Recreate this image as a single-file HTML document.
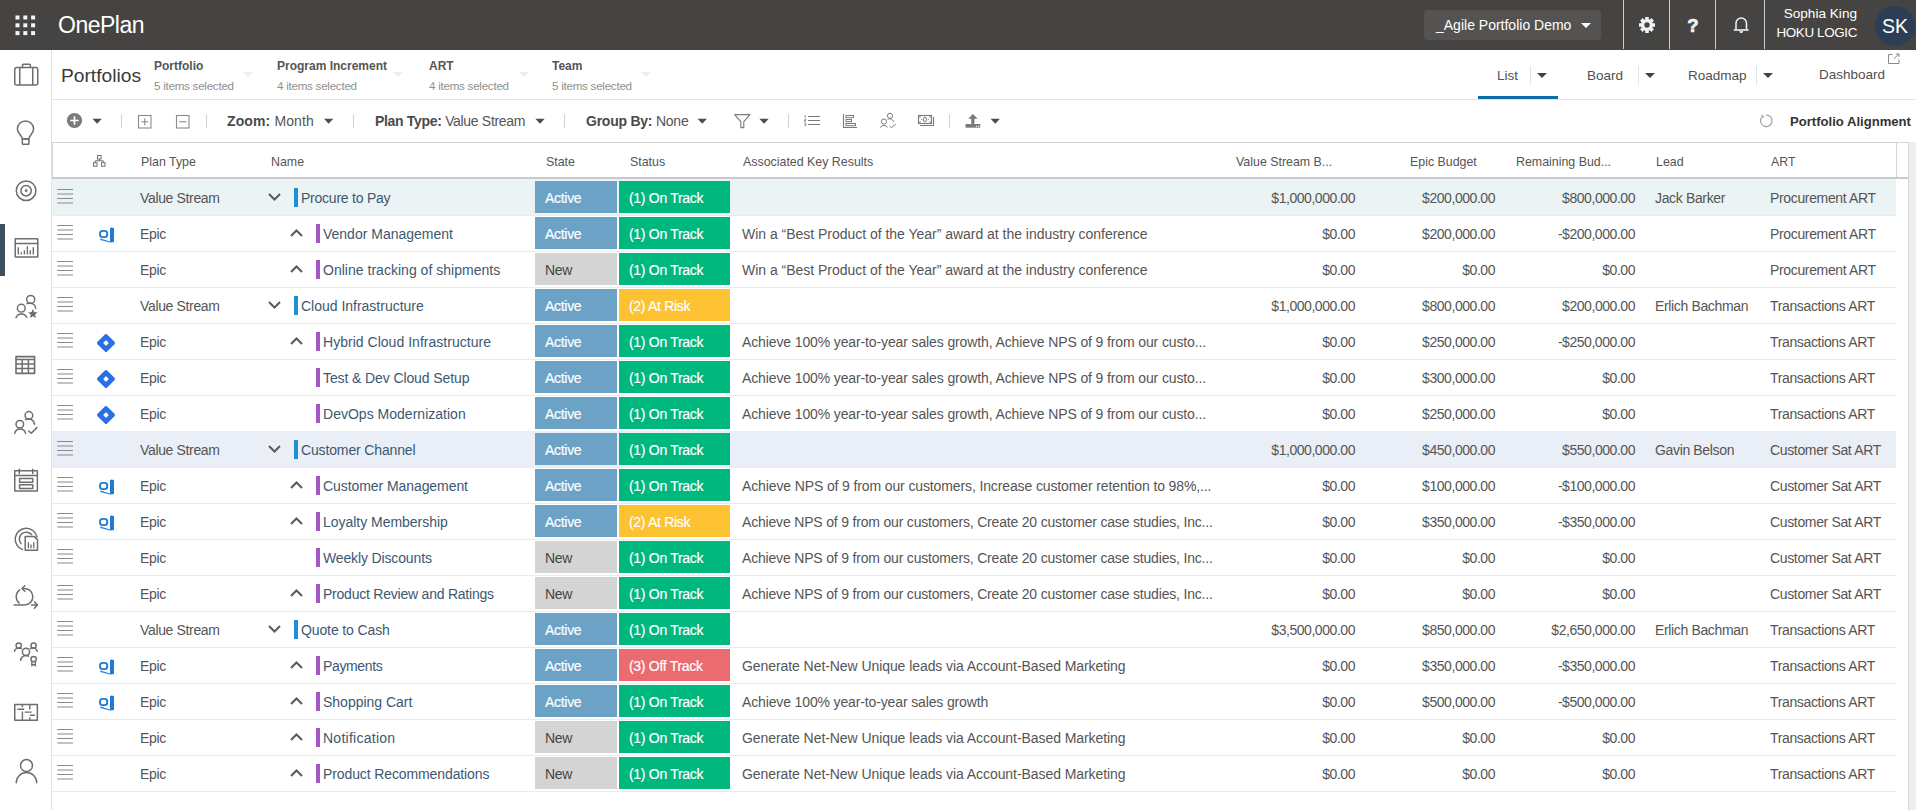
<!DOCTYPE html>
<html><head><meta charset="utf-8"><title>OnePlan - Portfolios</title>
<style>
html,body{margin:0;padding:0;}
body{width:1916px;height:810px;overflow:hidden;position:relative;background:#fff;font-family:"Liberation Sans",sans-serif;color:#444;}
div,span{box-sizing:border-box;}
svg{display:block;}
.abs{position:absolute;}
#top{position:absolute;left:0;top:0;width:1916px;height:50px;background:#464442;}
#waffle{position:absolute;left:15px;top:15px;width:21px;height:21px;}
#brand{position:absolute;left:58px;top:10px;font-size:23px;color:#fff;letter-spacing:-0.5px;line-height:30px;}
#proj{position:absolute;left:1424px;top:10px;width:177px;height:30px;background:#555351;border-radius:4px;}
#proj span{position:absolute;left:12px;top:7px;font-size:14px;color:#fff;line-height:16px;white-space:nowrap;}
.hsep{position:absolute;top:0;width:1px;height:49px;background:#d0d0d0;}
#uname{position:absolute;left:1740px;top:5.5px;width:117px;text-align:right;color:#fff;font-size:13.6px;line-height:16px;}
#uorg{position:absolute;left:1740px;top:25px;width:117px;text-align:right;color:#fff;font-size:13.4px;letter-spacing:-0.35px;line-height:16px;}
#avatar{position:absolute;left:1875px;top:6px;width:40px;height:40px;border-radius:50%;background:#2c3e55;color:#fff;font-size:19.5px;line-height:40px;text-align:center;}
#side{position:absolute;left:0;top:50px;width:52px;height:760px;background:#fff;border-right:1px solid #e1e1e1;}
.sico{position:absolute;}
#sideact{position:absolute;left:0;top:224px;width:5px;height:52px;background:#3f4f5b;}
#sub{position:absolute;left:52px;top:50px;width:1864px;height:50px;border-bottom:1px solid #e3e3e3;}
#ptitle{position:absolute;left:61px;top:64px;font-size:19.2px;color:#3a3a3a;line-height:24px;}
.flt{position:absolute;top:58.5px;}
.flt b{display:block;font-size:12px;color:#555;line-height:14px;white-space:nowrap;}
.flt i{display:block;font-style:normal;font-size:11.6px;letter-spacing:-0.25px;color:#8f8f8f;line-height:14px;margin-top:6px;white-space:nowrap;}
.fdd{position:absolute;top:72px;width:0;height:0;border-left:5px solid transparent;border-right:5px solid transparent;border-top:5px solid #eeeeee;}
.tab{position:absolute;top:67px;font-size:13.5px;color:#505050;line-height:18px;white-space:nowrap;}
.tsep{position:absolute;top:66px;width:1px;height:19px;background:#e3e3e3;}
.tri{position:absolute;width:0;height:0;border-left:5px solid transparent;border-right:5px solid transparent;border-top:5.5px solid #444;}
#tabline{position:absolute;left:1478px;top:96px;width:80px;height:3px;background:#0f6ca6;}
#tool{position:absolute;left:52px;top:100px;width:1864px;height:43px;border-bottom:1px solid #d9d9d9;}
.tl{position:absolute;top:113px;font-size:14px;color:#555;line-height:16px;white-space:nowrap;}
.tl b{color:#4a4a4a;}
.vsep{position:absolute;top:114px;width:1px;height:14px;background:#cfcfcf;}
#thead{position:absolute;left:52px;top:142px;width:1857px;height:37px;border-left:1px solid #d3d3d3;border-top:1px solid #d3d3d3;border-right:1px solid #d3d3d3;border-bottom:2px solid #c9c9c9;}
.th{position:absolute;top:155px;font-size:12.4px;color:#555;line-height:15px;white-space:nowrap;}
#scroll{position:absolute;left:1908px;top:142px;width:8px;height:668px;background:#eeeeee;border-left:1px solid #d6d6d6;}
.row{position:absolute;left:52px;width:1844px;height:37px;border-bottom:1px solid #ebebeb;}
.row.hl{background:#ebf3f4;}
.row.hl2{background:#eaeef6;}
.row .t{position:absolute;top:11px;font-size:14px;letter-spacing:-0.35px;color:#555;line-height:16px;white-space:nowrap;}
.hamb{position:absolute;left:5px;top:9px;width:17px;height:16px;}
.ic{position:absolute;left:46px;top:12px;width:16px;height:16px;}
.ic.j{left:43.5px;top:10px;width:20px;height:20px;}
.ptype{left:88px;}
.chev{position:absolute;top:14px;width:13px;height:8px;}
.bar{position:absolute;top:9px;width:4px;height:19px;}
.bar.vs{background:#1f8fd5;}
.bar.ep{background:#a257c2;}
.row .name{color:#3d5872;font-size:14px;letter-spacing:-0.1px;}
.state{position:absolute;left:483px;top:2px;width:82px;height:32px;font-size:14px;letter-spacing:-0.3px;line-height:35px;padding-left:10px;}
.state.act{background:#6ca2c6;color:#fff;-webkit-text-stroke:0.2px #fff;}
.state.new{background:#d4d4d4;color:#444;}
.status{position:absolute;left:567px;top:2px;width:111px;height:32px;font-size:14px;letter-spacing:-0.3px;line-height:35px;padding-left:10px;color:#fff;-webkit-text-stroke:0.2px #fff;}
.status.on{background:#00b77d;}
.status.risk{background:#fcc232;}
.status.off{background:#ea6b70;}
.row .kr{left:690px;font-size:14px;letter-spacing:-0.1px;}
.row .num{text-align:right;width:200px;font-size:14px;letter-spacing:-0.45px;}
.row .n1{left:1103px;}
.row .n2{left:1243px;}
.row .n3{left:1383px;}
.row .lead{left:1603px;}
.row .art{left:1718px;}

</style></head><body>
<div id="top">
  <svg id="waffle" width="21" height="21" viewBox="0 0 21 21" style="left:15px;top:15px">
    <g fill="#f4f4f4">
      <rect x="0.5" y="0.5" width="4" height="4"/><rect x="8.3" y="0.5" width="4" height="4"/><rect x="16.1" y="0.5" width="4" height="4"/>
      <rect x="0.5" y="8.3" width="4" height="4"/><rect x="8.3" y="8.3" width="4" height="4"/><rect x="16.1" y="8.3" width="4" height="4"/>
      <rect x="0.5" y="16.1" width="4" height="4"/><rect x="8.3" y="16.1" width="4" height="4"/><rect x="16.1" y="16.1" width="4" height="4"/>
    </g>
  </svg>
  <div id="brand">OnePlan</div>
  <div id="proj"><span>_Agile Portfolio Demo</span><div class="tri" style="left:157px;top:13px;border-top-color:#fff;"></div></div>
  <div class="hsep" style="left:1623px"></div>
  <div class="hsep" style="left:1669px"></div>
  <div class="hsep" style="left:1715px"></div>
  <div class="hsep" style="left:1764px"></div>
  <div id="uname">Sophia King</div>
  <div id="uorg">HOKU LOGIC</div>
  <div id="avatar">SK</div>
</div>
<div id="side"></div>
<div id="sideact"></div>
<div id="sub"></div>
<div id="ptitle">Portfolios</div>
<div class="flt" style="left:154px"><b>Portfolio</b><i>5 items selected</i></div>
<div class="flt" style="left:277px"><b>Program Increment</b><i>4 items selected</i></div>
<div class="flt" style="left:429px"><b>ART</b><i>4 items selected</i></div>
<div class="flt" style="left:552px"><b>Team</b><i>5 items selected</i></div>
<div class="fdd" style="left:243px"></div>
<div class="fdd" style="left:393px"></div>
<div class="fdd" style="left:519px"></div>
<div class="fdd" style="left:641px"></div>
<div class="tab" style="left:1497px">List</div>
<div class="tsep" style="left:1530px"></div>
<div class="tri" style="left:1537px;top:72.5px"></div>
<div class="tab" style="left:1587px">Board</div>
<div class="tsep" style="left:1638px"></div>
<div class="tri" style="left:1645px;top:72.5px"></div>
<div class="tab" style="left:1688px">Roadmap</div>
<div class="tsep" style="left:1756px"></div>
<div class="tri" style="left:1763px;top:72.5px"></div>
<div class="tab" style="left:1819px;top:66px">Dashboard</div>
<div id="tabline"></div>
<div id="tool"></div>
<div class="tl" style="left:227px;letter-spacing:0.12px"><b>Zoom:</b> Month</div>
<div class="tl" style="left:375px;letter-spacing:-0.32px"><b>Plan Type:</b> Value Stream</div>
<div class="tl" style="left:586px;letter-spacing:-0.24px"><b>Group By:</b> None</div>
<div class="tl" style="left:1790px;top:114px;color:#333;font-size:13.1px"><b style="color:#333">Portfolio Alignment</b></div>
<div id="thead"></div>
<div class="th" style="left:141px">Plan Type</div>
<div class="th" style="left:271px">Name</div>
<div class="th" style="left:546px">State</div>
<div class="th" style="left:630px">Status</div>
<div class="th" style="left:743px">Associated Key Results</div>
<div class="th" style="left:1236px">Value Stream B...</div>
<div class="th" style="left:1410px">Epic Budget</div>
<div class="th" style="left:1516px">Remaining Bud...</div>
<div class="th" style="left:1656px">Lead</div>
<div class="th" style="left:1771px">ART</div>
<div style="position:absolute;left:1896px;top:143px;width:1px;height:34px;background:#d3d3d3"></div>
<div id="scroll"></div>
<svg class="abs" style="left:0;top:0;pointer-events:none" width="1916" height="810" viewBox="0 0 1916 810">
  <!-- header icons -->
  <g fill="#f2f2f2"><path d="M1645.25 19.26 L1645.16 17.01 L1648.84 17.01 L1648.75 19.26 L1649.82 19.70 L1651.35 18.05 L1653.95 20.65 L1652.30 22.18 L1652.74 23.25 L1654.99 23.16 L1654.99 26.84 L1652.74 26.75 L1652.30 27.82 L1653.95 29.35 L1651.35 31.95 L1649.82 30.30 L1648.75 30.74 L1648.84 32.99 L1645.16 32.99 L1645.25 30.74 L1644.18 30.30 L1642.65 31.95 L1640.05 29.35 L1641.70 27.82 L1641.26 26.75 L1639.01 26.84 L1639.01 23.16 L1641.26 23.25 L1641.70 22.18 L1640.05 20.65 L1642.65 18.05 L1644.18 19.70 Z M1649.70 25.00 A2.7 2.7 0 1 0 1644.30 25.00 A2.7 2.7 0 1 0 1649.70 25.00 Z" fill-rule="evenodd"/></g>
  <text x="1687.3" y="32" font-family="Liberation Sans" font-weight="bold" font-size="18.5" fill="#f2f2f2" stroke="#f2f2f2" stroke-width="0.7">?</text>
  <path d="M1736 29.6 V23.2 A5.25 5.25 0 0 1 1746.5 23.2 V29.6" fill="none" stroke="#f2f2f2" stroke-width="1.5"/>
  <path d="M1733.8 30 H1748.6" stroke="#f2f2f2" stroke-width="1.6"/>
  <path d="M1739.8 31.2 a1.45 1.45 0 0 0 2.9 0" fill="#f2f2f2" stroke="#f2f2f2" stroke-width="1"/>
  <!-- expand icon -->
  <g fill="none" stroke="#8a8a8a" stroke-width="1">
    <path d="M1892.5 54.5 h-4 v9 h10.5 v-4"/>
    <path d="M1894 58.5 l5 -4.5 M1896 54 h3 v3"/>
  </g>
  <!-- toolbar -->
  <circle cx="74.5" cy="120.5" r="7.6" fill="#7b7b7b"/>
  <path d="M70.3 120.5 H78.7 M74.5 116.3 V124.7" stroke="#fff" stroke-width="1.7"/>
  <g fill="#4d4d4d">
    <path d="M92.5 118.8 h9.3 l-4.65 5 z"/>
    <path d="M324 118.8 h9.3 l-4.65 5 z"/>
    <path d="M535.4 118.8 h9.3 l-4.65 5 z"/>
    <path d="M697.6 118.8 h9.3 l-4.65 5 z"/>
    <path d="M759.4 118.8 h9.3 l-4.65 5 z"/>
    <path d="M990.6 118.8 h9.3 l-4.65 5 z"/>
  </g>
  <g fill="#d2d2d2">
    <rect x="121" y="114" width="1" height="14"/>
    <rect x="206" y="114" width="1" height="14"/>
    <rect x="353" y="114" width="1" height="14"/>
    <rect x="564" y="114" width="1" height="14"/>
    <rect x="788" y="114" width="1" height="14"/>
    <rect x="949" y="114" width="1" height="14"/>
  </g>
  <g fill="none" stroke="#8a8a8a" stroke-width="1.1">
    <rect x="138.5" y="115.5" width="12.5" height="12.5"/>
    <path d="M141.2 121.75 H148.3 M144.75 118.2 V125.3"/>
    <rect x="176.5" y="115.5" width="12.5" height="12.5"/>
    <path d="M179.2 121.75 H186.3"/>
  </g>
  <g fill="none" stroke="#7a7a7a" stroke-width="1.1">
    <path d="M734.6 114.6 H750 L743.8 121.6 V127.6 H740.8 V121.6 Z" stroke-linejoin="round"/>
    <path d="M808 116.5 H820 M808 120.5 H820 M808 124.5 H820" stroke-width="1.2"/>
    <path d="M805.2 115 V117.8 M804.4 119.2 H805.8 V120.4 H804.4 V121.7 H805.8 M804.4 123.2 H805.8 V124.4 H804.6 M805.8 124.4 V125.7 H804.4" stroke-width="0.8"/>
    <path d="M843.5 114 V127.5 H857"/>
    <rect x="846" y="115.5" width="7.5" height="2.2" stroke-width="1"/>
    <rect x="846" y="119.5" width="5.5" height="2.2" stroke-width="1"/>
    <rect x="846" y="123.5" width="9.5" height="2.2" stroke-width="1"/>
    <circle cx="890" cy="115.8" r="2.6" stroke-width="1"/>
    <path d="M887.6 119.2 A4.3 4.3 0 0 1 893.6 121.8" stroke-width="1"/>
    <circle cx="883.9" cy="121.6" r="2.6" stroke-width="1"/>
    <path d="M880.3 127.7 A4 4 0 0 1 887.4 127.5" stroke-width="1"/>
    <path d="M889.7 126.2 L891.5 127.7 L895.7 124" stroke-width="1"/>
    <rect x="918.5" y="115.5" width="13" height="8" stroke-width="1.1"/>
    <path d="M920 125.5 H933.5 V117" stroke-width="1.1"/>
    <ellipse cx="924.9" cy="119.5" rx="1.6" ry="2.3" stroke-width="1"/>
    <path d="M1762.3 116.6 A5.8 5.8 0 1 0 1765.8 115" stroke="#9a9a9a" stroke-width="1.1"/>
    <path d="M1762 114.5 L1762.3 116.8 L1764.6 117" stroke="#9a9a9a" stroke-width="1.1"/>
  </g>
  <g fill="#7a7a7a">
    <circle cx="921.6" cy="119.5" r="0.6"/><circle cx="928.3" cy="119.5" r="0.6"/>
    <rect x="919.3" y="116.3" width="1.3" height="1.3"/><rect x="929.4" y="116.3" width="1.3" height="1.3"/>
    <rect x="919.3" y="121.4" width="1.3" height="1.3"/><rect x="929.4" y="121.4" width="1.3" height="1.3"/>
    <path d="M972.9 114 L977.7 118.7 H974.5 V122.8 A1.65 1.65 0 0 1 971.2 122.8 V118.7 H968.2 Z"/>
    <rect x="965.5" y="124" width="14.7" height="3.7"/>
  </g>
  <g fill="#fff"><rect x="976" y="125.8" width="1.1" height="1.1"/><rect x="978" y="125.8" width="1.1" height="1.1"/></g>
  <!-- thead hierarchy -->
  <g fill="none" stroke="#707070" stroke-width="1">
    <rect x="97.5" y="155.5" width="3.5" height="3.5"/>
    <rect x="93.5" y="162.7" width="3.5" height="3.5"/>
    <rect x="101.5" y="162.7" width="3.5" height="3.5"/>
    <path d="M99.25 159 V160.8 M95.25 162.7 V160.8 H103.25 V162.7"/>
  </g>
  <!-- sidebar icons -->
  <g fill="none" stroke="#6e6e6e" stroke-width="1.5" stroke-linejoin="round" stroke-linecap="round">
    <rect x="14.75" y="67.5" width="23" height="17.5" rx="2"/>
    <path d="M22.5 67.5 V65 a0.8 0.8 0 0 1 0.8 -0.8 H29.5 a0.8 0.8 0 0 1 0.8 0.8 V67.5"/>
    <path d="M19.75 68 V84.5 M32.75 68 V84.5"/>
    <path d="M22.3 139 C22.3 135.6 17.4 133.6 17.4 129 A8.1 8.1 0 0 1 33.6 129 C33.6 133.6 28.9 135.6 28.9 139 Z"/>
    <rect x="22.3" y="139" width="6.6" height="5.2" rx="0.8"/>
    <circle cx="26.1" cy="190.7" r="9.8"/>
    <circle cx="26.1" cy="190.7" r="5.2"/>
    <rect x="15.25" y="238.75" width="22.5" height="18.25"/>
    <path d="M15.25 243.6 H37.75"/>
    <path d="M18.3 254.6 V247.3 M21.2 254.6 V252.3 M24.4 254.6 V250.3 M27.4 254.6 V246.3 M30.3 254.6 V250.3 M33.3 254.6 V247.3" stroke-width="1.4" stroke-linecap="butt"/>
    <circle cx="30.7" cy="299.4" r="4"/>
    <path d="M27 303.6 A6.2 6.2 0 0 1 35.8 308.2"/>
    <circle cx="21.3" cy="308.2" r="3.9"/>
    <path d="M16 317.6 A5.9 5.9 0 0 1 26.8 317.3"/>
    <rect x="16" y="356.6" width="18.6" height="16.8" stroke-width="1.6"/>
    <path d="M16 359.6 H34.6 M16 364.1 H34.6 M16 368.4 H34.6 M22.2 359.6 V373.4 M28.4 359.6 V373.4" stroke-width="1.5" stroke-linecap="butt"/>
    <circle cx="28.9" cy="415.4" r="3.8"/>
    <path d="M25.4 419.6 A6 6 0 0 1 34.4 424.2"/>
    <circle cx="19.8" cy="424.2" r="3.8"/>
    <path d="M14.7 433.3 A5.6 5.6 0 0 1 25.6 433.3"/>
    <path d="M28.7 431 L31.3 433.3 L36.9 427.6"/>
    <rect x="14.75" y="470.75" width="22.6" height="20.3"/>
    <path d="M14.75 475.5 H37.35 M19.3 469.2 V473.5 M32.7 469.2 V473.5"/>
    <rect x="19.6" y="478.6" width="13.2" height="3.7"/>
    <rect x="19.6" y="484.8" width="13.2" height="3.7"/>
    <path d="M22.6 549.6 A11 11 0 1 1 37 537.2"/>
    <path d="M21 543.6 A6.5 6.5 0 1 1 31.6 534.6"/>
    <path d="M25.2 550.3 V536.6 H34.3 L37.5 539.8 V550.3 Z"/>
    <path d="M28.4 547.8 V542.6 M31 547.8 V545 M33.8 547.8 V542.6" stroke-width="1.3"/>
    <path d="M14.2 605 H24.5 A8.3 8.3 0 1 0 23.06 588.53"/>
    <path d="M19.74 589.9 A8.3 8.3 0 0 0 19.16 603.06"/>
    <path d="M24.8 585.8 L22 588.5 L24.8 591.2"/>
    <path d="M31.5 605.1 H37.3 M34.5 602 L37.5 605.1 L34.5 608.3"/>
    <circle cx="18.7" cy="645.6" r="2.6"/>
    <circle cx="33.6" cy="645.6" r="2.6"/>
    <circle cx="26" cy="651.8" r="3.6"/>
    <path d="M14.4 651.3 A4.6 4.6 0 0 1 21.4 648.6 M37.3 651.3 A4.6 4.6 0 0 0 30.3 648.6 M20.7 660.4 A5.2 5.2 0 0 1 28.6 656.2"/>
    <circle cx="33.6" cy="659.1" r="2.7"/>
    <path d="M31.8 661.6 V665.8 L33.6 664.3 L35.4 665.8 V661.6" stroke-width="1.3"/>
    <rect x="14.75" y="704.6" width="22.6" height="15.6"/>
    <path d="M17.4 709.2 H24.2 M22.4 704.6 V707.2 M22.4 711.4 V720 M29.8 704.6 V709.4 M24.6 712.1 H31.6 M29.8 717.2 V720 M29.8 715.2 H34.8" stroke-width="1.4" stroke-linecap="butt"/>
    <circle cx="26.5" cy="765.6" r="6"/>
    <path d="M16.3 782.8 a10.2 10.2 0 0 1 20.4 0"/>
  </g>
  <path d="M32.9 309 l1.35 3.1 l3.35 0.3 l-2.55 2.2 l0.8 3.3 l-2.95 -1.75 l-2.95 1.75 l0.8 -3.3 l-2.55 -2.2 l3.35 -0.3 z" fill="#6e6e6e"/>
  <circle cx="26.1" cy="190.7" r="1.4" fill="#6e6e6e"/>
</svg>

<div id="rows">
<div class="row hl" style="top:179px"><div class="hamb"><svg width="17" height="16" viewBox="0 0 17 16"><path d="M0.2 1.5H16M0.2 6H16M0.2 10.5H16M0.2 15H16" stroke="#8a8a8a" stroke-width="1.2"/></svg></div><div class="t ptype">Value Stream</div><div class="chev" style="left:216px"><svg width="13" height="8" viewBox="0 0 13 8"><path d="M1 1 L6.5 6.5 L12 1" fill="none" stroke="#5a5a5a" stroke-width="2"/></svg></div><div class="bar vs" style="left:242px"></div><div class="t name" style="left:249px;letter-spacing:-0.231px">Procure to Pay</div><div class="state act">Active</div><div class="status on">(1) On Track</div><div class="t num n1">$1,000,000.00</div><div class="t num n2">$200,000.00</div><div class="t num n3">$800,000.00</div><div class="t lead">Jack Barker</div><div class="t art">Procurement ART</div></div>
<div class="row" style="top:215px"><div class="hamb"><svg width="17" height="16" viewBox="0 0 17 16"><path d="M0.2 1.5H16M0.2 6H16M0.2 10.5H16M0.2 15H16" stroke="#8a8a8a" stroke-width="1.2"/></svg></div><div class="ic"><svg width="16" height="16" viewBox="0 0 16 16"><path d="M12 1.2 L13.4 0.5 L16 0.9 V15 L12 15.5 Z" fill="#1c7bd4"/><path d="M2.3 11.6 L12 14.4 V15.6 L2.3 13 Z" fill="#1c7bd4"/><rect x="2" y="3.9" width="7.2" height="6.2" rx="2.6" fill="none" stroke="#1c7bd4" stroke-width="1.9"/></svg></div><div class="t ptype">Epic</div><div class="chev" style="left:238px"><svg width="13" height="8" viewBox="0 0 13 8"><path d="M1 7 L6.5 1.5 L12 7" fill="none" stroke="#5a5a5a" stroke-width="2"/></svg></div><div class="bar ep" style="left:264px"></div><div class="t name" style="left:271px;letter-spacing:-0.006px">Vendor Management</div><div class="state act">Active</div><div class="status on">(1) On Track</div><div class="t kr" style="letter-spacing:-0.022px">Win a “Best Product of the Year” award at the industry conference</div><div class="t num n1">$0.00</div><div class="t num n2">$200,000.00</div><div class="t num n3">-$200,000.00</div><div class="t art">Procurement ART</div></div>
<div class="row" style="top:251px"><div class="hamb"><svg width="17" height="16" viewBox="0 0 17 16"><path d="M0.2 1.5H16M0.2 6H16M0.2 10.5H16M0.2 15H16" stroke="#8a8a8a" stroke-width="1.2"/></svg></div><div class="t ptype">Epic</div><div class="chev" style="left:238px"><svg width="13" height="8" viewBox="0 0 13 8"><path d="M1 7 L6.5 1.5 L12 7" fill="none" stroke="#5a5a5a" stroke-width="2"/></svg></div><div class="bar ep" style="left:264px"></div><div class="t name" style="left:271px;letter-spacing:0.022px">Online tracking of shipments</div><div class="state new">New</div><div class="status on">(1) On Track</div><div class="t kr" style="letter-spacing:-0.022px">Win a “Best Product of the Year” award at the industry conference</div><div class="t num n1">$0.00</div><div class="t num n2">$0.00</div><div class="t num n3">$0.00</div><div class="t art">Procurement ART</div></div>
<div class="row" style="top:287px"><div class="hamb"><svg width="17" height="16" viewBox="0 0 17 16"><path d="M0.2 1.5H16M0.2 6H16M0.2 10.5H16M0.2 15H16" stroke="#8a8a8a" stroke-width="1.2"/></svg></div><div class="t ptype">Value Stream</div><div class="chev" style="left:216px"><svg width="13" height="8" viewBox="0 0 13 8"><path d="M1 1 L6.5 6.5 L12 1" fill="none" stroke="#5a5a5a" stroke-width="2"/></svg></div><div class="bar vs" style="left:242px"></div><div class="t name" style="left:249px;letter-spacing:-0.011px">Cloud Infrastructure</div><div class="state act">Active</div><div class="status risk">(2) At Risk</div><div class="t num n1">$1,000,000.00</div><div class="t num n2">$800,000.00</div><div class="t num n3">$200,000.00</div><div class="t lead">Erlich Bachman</div><div class="t art">Transactions ART</div></div>
<div class="row" style="top:323px"><div class="hamb"><svg width="17" height="16" viewBox="0 0 17 16"><path d="M0.2 1.5H16M0.2 6H16M0.2 10.5H16M0.2 15H16" stroke="#8a8a8a" stroke-width="1.2"/></svg></div><div class="ic j"><svg width="20" height="20" viewBox="0 0 20 20"><rect x="3.2" y="3.2" width="13.6" height="13.6" rx="1.6" transform="rotate(45 10 10)" fill="#2a6fe6"/><rect x="8" y="8" width="4" height="4" rx="0.6" transform="rotate(45 10 10)" fill="#fff"/></svg></div><div class="t ptype">Epic</div><div class="chev" style="left:238px"><svg width="13" height="8" viewBox="0 0 13 8"><path d="M1 7 L6.5 1.5 L12 7" fill="none" stroke="#5a5a5a" stroke-width="2"/></svg></div><div class="bar ep" style="left:264px"></div><div class="t name" style="left:271px;letter-spacing:0.027px">Hybrid Cloud Infrastructure</div><div class="state act">Active</div><div class="status on">(1) On Track</div><div class="t kr" style="letter-spacing:-0.122px">Achieve 100% year-to-year sales growth, Achieve NPS of 9 from our custo...</div><div class="t num n1">$0.00</div><div class="t num n2">$250,000.00</div><div class="t num n3">-$250,000.00</div><div class="t art">Transactions ART</div></div>
<div class="row" style="top:359px"><div class="hamb"><svg width="17" height="16" viewBox="0 0 17 16"><path d="M0.2 1.5H16M0.2 6H16M0.2 10.5H16M0.2 15H16" stroke="#8a8a8a" stroke-width="1.2"/></svg></div><div class="ic j"><svg width="20" height="20" viewBox="0 0 20 20"><rect x="3.2" y="3.2" width="13.6" height="13.6" rx="1.6" transform="rotate(45 10 10)" fill="#2a6fe6"/><rect x="8" y="8" width="4" height="4" rx="0.6" transform="rotate(45 10 10)" fill="#fff"/></svg></div><div class="t ptype">Epic</div><div class="bar ep" style="left:264px"></div><div class="t name" style="left:271px;letter-spacing:-0.105px">Test &amp; Dev Cloud Setup</div><div class="state act">Active</div><div class="status on">(1) On Track</div><div class="t kr" style="letter-spacing:-0.122px">Achieve 100% year-to-year sales growth, Achieve NPS of 9 from our custo...</div><div class="t num n1">$0.00</div><div class="t num n2">$300,000.00</div><div class="t num n3">$0.00</div><div class="t art">Transactions ART</div></div>
<div class="row" style="top:395px"><div class="hamb"><svg width="17" height="16" viewBox="0 0 17 16"><path d="M0.2 1.5H16M0.2 6H16M0.2 10.5H16M0.2 15H16" stroke="#8a8a8a" stroke-width="1.2"/></svg></div><div class="ic j"><svg width="20" height="20" viewBox="0 0 20 20"><rect x="3.2" y="3.2" width="13.6" height="13.6" rx="1.6" transform="rotate(45 10 10)" fill="#2a6fe6"/><rect x="8" y="8" width="4" height="4" rx="0.6" transform="rotate(45 10 10)" fill="#fff"/></svg></div><div class="t ptype">Epic</div><div class="bar ep" style="left:264px"></div><div class="t name" style="left:271px;letter-spacing:0.016px">DevOps Modernization</div><div class="state act">Active</div><div class="status on">(1) On Track</div><div class="t kr" style="letter-spacing:-0.122px">Achieve 100% year-to-year sales growth, Achieve NPS of 9 from our custo...</div><div class="t num n1">$0.00</div><div class="t num n2">$250,000.00</div><div class="t num n3">$0.00</div><div class="t art">Transactions ART</div></div>
<div class="row hl2" style="top:431px"><div class="hamb"><svg width="17" height="16" viewBox="0 0 17 16"><path d="M0.2 1.5H16M0.2 6H16M0.2 10.5H16M0.2 15H16" stroke="#8a8a8a" stroke-width="1.2"/></svg></div><div class="t ptype">Value Stream</div><div class="chev" style="left:216px"><svg width="13" height="8" viewBox="0 0 13 8"><path d="M1 1 L6.5 6.5 L12 1" fill="none" stroke="#5a5a5a" stroke-width="2"/></svg></div><div class="bar vs" style="left:242px"></div><div class="t name" style="left:249px;letter-spacing:-0.140px">Customer Channel</div><div class="state act">Active</div><div class="status on">(1) On Track</div><div class="t num n1">$1,000,000.00</div><div class="t num n2">$450,000.00</div><div class="t num n3">$550,000.00</div><div class="t lead">Gavin Belson</div><div class="t art">Customer Sat ART</div></div>
<div class="row" style="top:467px"><div class="hamb"><svg width="17" height="16" viewBox="0 0 17 16"><path d="M0.2 1.5H16M0.2 6H16M0.2 10.5H16M0.2 15H16" stroke="#8a8a8a" stroke-width="1.2"/></svg></div><div class="ic"><svg width="16" height="16" viewBox="0 0 16 16"><path d="M12 1.2 L13.4 0.5 L16 0.9 V15 L12 15.5 Z" fill="#1c7bd4"/><path d="M2.3 11.6 L12 14.4 V15.6 L2.3 13 Z" fill="#1c7bd4"/><rect x="2" y="3.9" width="7.2" height="6.2" rx="2.6" fill="none" stroke="#1c7bd4" stroke-width="1.9"/></svg></div><div class="t ptype">Epic</div><div class="chev" style="left:238px"><svg width="13" height="8" viewBox="0 0 13 8"><path d="M1 7 L6.5 1.5 L12 7" fill="none" stroke="#5a5a5a" stroke-width="2"/></svg></div><div class="bar ep" style="left:264px"></div><div class="t name" style="left:271px;letter-spacing:-0.072px">Customer Management</div><div class="state act">Active</div><div class="status on">(1) On Track</div><div class="t kr" style="letter-spacing:-0.123px">Achieve NPS of 9 from our customers, Increase customer retention to 98%,...</div><div class="t num n1">$0.00</div><div class="t num n2">$100,000.00</div><div class="t num n3">-$100,000.00</div><div class="t art">Customer Sat ART</div></div>
<div class="row" style="top:503px"><div class="hamb"><svg width="17" height="16" viewBox="0 0 17 16"><path d="M0.2 1.5H16M0.2 6H16M0.2 10.5H16M0.2 15H16" stroke="#8a8a8a" stroke-width="1.2"/></svg></div><div class="ic"><svg width="16" height="16" viewBox="0 0 16 16"><path d="M12 1.2 L13.4 0.5 L16 0.9 V15 L12 15.5 Z" fill="#1c7bd4"/><path d="M2.3 11.6 L12 14.4 V15.6 L2.3 13 Z" fill="#1c7bd4"/><rect x="2" y="3.9" width="7.2" height="6.2" rx="2.6" fill="none" stroke="#1c7bd4" stroke-width="1.9"/></svg></div><div class="t ptype">Epic</div><div class="chev" style="left:238px"><svg width="13" height="8" viewBox="0 0 13 8"><path d="M1 7 L6.5 1.5 L12 7" fill="none" stroke="#5a5a5a" stroke-width="2"/></svg></div><div class="bar ep" style="left:264px"></div><div class="t name" style="left:271px;letter-spacing:-0.024px">Loyalty Membership</div><div class="state act">Active</div><div class="status risk">(2) At Risk</div><div class="t kr" style="letter-spacing:-0.185px">Achieve NPS of 9 from our customers, Create 20 customer case studies, Inc...</div><div class="t num n1">$0.00</div><div class="t num n2">$350,000.00</div><div class="t num n3">-$350,000.00</div><div class="t art">Customer Sat ART</div></div>
<div class="row" style="top:539px"><div class="hamb"><svg width="17" height="16" viewBox="0 0 17 16"><path d="M0.2 1.5H16M0.2 6H16M0.2 10.5H16M0.2 15H16" stroke="#8a8a8a" stroke-width="1.2"/></svg></div><div class="t ptype">Epic</div><div class="bar ep" style="left:264px"></div><div class="t name" style="left:271px;letter-spacing:-0.140px">Weekly Discounts</div><div class="state new">New</div><div class="status on">(1) On Track</div><div class="t kr" style="letter-spacing:-0.185px">Achieve NPS of 9 from our customers, Create 20 customer case studies, Inc...</div><div class="t num n1">$0.00</div><div class="t num n2">$0.00</div><div class="t num n3">$0.00</div><div class="t art">Customer Sat ART</div></div>
<div class="row" style="top:575px"><div class="hamb"><svg width="17" height="16" viewBox="0 0 17 16"><path d="M0.2 1.5H16M0.2 6H16M0.2 10.5H16M0.2 15H16" stroke="#8a8a8a" stroke-width="1.2"/></svg></div><div class="t ptype">Epic</div><div class="chev" style="left:238px"><svg width="13" height="8" viewBox="0 0 13 8"><path d="M1 7 L6.5 1.5 L12 7" fill="none" stroke="#5a5a5a" stroke-width="2"/></svg></div><div class="bar ep" style="left:264px"></div><div class="t name" style="left:271px;letter-spacing:-0.224px">Product Review and Ratings</div><div class="state new">New</div><div class="status on">(1) On Track</div><div class="t kr" style="letter-spacing:-0.185px">Achieve NPS of 9 from our customers, Create 20 customer case studies, Inc...</div><div class="t num n1">$0.00</div><div class="t num n2">$0.00</div><div class="t num n3">$0.00</div><div class="t art">Customer Sat ART</div></div>
<div class="row" style="top:611px"><div class="hamb"><svg width="17" height="16" viewBox="0 0 17 16"><path d="M0.2 1.5H16M0.2 6H16M0.2 10.5H16M0.2 15H16" stroke="#8a8a8a" stroke-width="1.2"/></svg></div><div class="t ptype">Value Stream</div><div class="chev" style="left:216px"><svg width="13" height="8" viewBox="0 0 13 8"><path d="M1 1 L6.5 6.5 L12 1" fill="none" stroke="#5a5a5a" stroke-width="2"/></svg></div><div class="bar vs" style="left:242px"></div><div class="t name" style="left:249px;letter-spacing:-0.117px">Quote to Cash</div><div class="state act">Active</div><div class="status on">(1) On Track</div><div class="t num n1">$3,500,000.00</div><div class="t num n2">$850,000.00</div><div class="t num n3">$2,650,000.00</div><div class="t lead">Erlich Bachman</div><div class="t art">Transactions ART</div></div>
<div class="row" style="top:647px"><div class="hamb"><svg width="17" height="16" viewBox="0 0 17 16"><path d="M0.2 1.5H16M0.2 6H16M0.2 10.5H16M0.2 15H16" stroke="#8a8a8a" stroke-width="1.2"/></svg></div><div class="ic"><svg width="16" height="16" viewBox="0 0 16 16"><path d="M12 1.2 L13.4 0.5 L16 0.9 V15 L12 15.5 Z" fill="#1c7bd4"/><path d="M2.3 11.6 L12 14.4 V15.6 L2.3 13 Z" fill="#1c7bd4"/><rect x="2" y="3.9" width="7.2" height="6.2" rx="2.6" fill="none" stroke="#1c7bd4" stroke-width="1.9"/></svg></div><div class="t ptype">Epic</div><div class="chev" style="left:238px"><svg width="13" height="8" viewBox="0 0 13 8"><path d="M1 7 L6.5 1.5 L12 7" fill="none" stroke="#5a5a5a" stroke-width="2"/></svg></div><div class="bar ep" style="left:264px"></div><div class="t name" style="left:271px;letter-spacing:-0.357px">Payments</div><div class="state act">Active</div><div class="status off">(3) Off Track</div><div class="t kr" style="letter-spacing:-0.071px">Generate Net-New Unique leads via Account-Based Marketing</div><div class="t num n1">$0.00</div><div class="t num n2">$350,000.00</div><div class="t num n3">-$350,000.00</div><div class="t art">Transactions ART</div></div>
<div class="row" style="top:683px"><div class="hamb"><svg width="17" height="16" viewBox="0 0 17 16"><path d="M0.2 1.5H16M0.2 6H16M0.2 10.5H16M0.2 15H16" stroke="#8a8a8a" stroke-width="1.2"/></svg></div><div class="ic"><svg width="16" height="16" viewBox="0 0 16 16"><path d="M12 1.2 L13.4 0.5 L16 0.9 V15 L12 15.5 Z" fill="#1c7bd4"/><path d="M2.3 11.6 L12 14.4 V15.6 L2.3 13 Z" fill="#1c7bd4"/><rect x="2" y="3.9" width="7.2" height="6.2" rx="2.6" fill="none" stroke="#1c7bd4" stroke-width="1.9"/></svg></div><div class="t ptype">Epic</div><div class="chev" style="left:238px"><svg width="13" height="8" viewBox="0 0 13 8"><path d="M1 7 L6.5 1.5 L12 7" fill="none" stroke="#5a5a5a" stroke-width="2"/></svg></div><div class="bar ep" style="left:264px"></div><div class="t name" style="left:271px;letter-spacing:-0.008px">Shopping Cart</div><div class="state act">Active</div><div class="status on">(1) On Track</div><div class="t kr" style="letter-spacing:-0.138px">Achieve 100% year-to-year sales growth</div><div class="t num n1">$0.00</div><div class="t num n2">$500,000.00</div><div class="t num n3">-$500,000.00</div><div class="t art">Transactions ART</div></div>
<div class="row" style="top:719px"><div class="hamb"><svg width="17" height="16" viewBox="0 0 17 16"><path d="M0.2 1.5H16M0.2 6H16M0.2 10.5H16M0.2 15H16" stroke="#8a8a8a" stroke-width="1.2"/></svg></div><div class="t ptype">Epic</div><div class="chev" style="left:238px"><svg width="13" height="8" viewBox="0 0 13 8"><path d="M1 7 L6.5 1.5 L12 7" fill="none" stroke="#5a5a5a" stroke-width="2"/></svg></div><div class="bar ep" style="left:264px"></div><div class="t name" style="left:271px;letter-spacing:0.264px">Notification</div><div class="state new">New</div><div class="status on">(1) On Track</div><div class="t kr" style="letter-spacing:-0.071px">Generate Net-New Unique leads via Account-Based Marketing</div><div class="t num n1">$0.00</div><div class="t num n2">$0.00</div><div class="t num n3">$0.00</div><div class="t art">Transactions ART</div></div>
<div class="row" style="top:755px"><div class="hamb"><svg width="17" height="16" viewBox="0 0 17 16"><path d="M0.2 1.5H16M0.2 6H16M0.2 10.5H16M0.2 15H16" stroke="#8a8a8a" stroke-width="1.2"/></svg></div><div class="t ptype">Epic</div><div class="chev" style="left:238px"><svg width="13" height="8" viewBox="0 0 13 8"><path d="M1 7 L6.5 1.5 L12 7" fill="none" stroke="#5a5a5a" stroke-width="2"/></svg></div><div class="bar ep" style="left:264px"></div><div class="t name" style="left:271px;letter-spacing:-0.109px">Product Recommendations</div><div class="state new">New</div><div class="status on">(1) On Track</div><div class="t kr" style="letter-spacing:-0.071px">Generate Net-New Unique leads via Account-Based Marketing</div><div class="t num n1">$0.00</div><div class="t num n2">$0.00</div><div class="t num n3">$0.00</div><div class="t art">Transactions ART</div></div>
</div>
</body></html>
